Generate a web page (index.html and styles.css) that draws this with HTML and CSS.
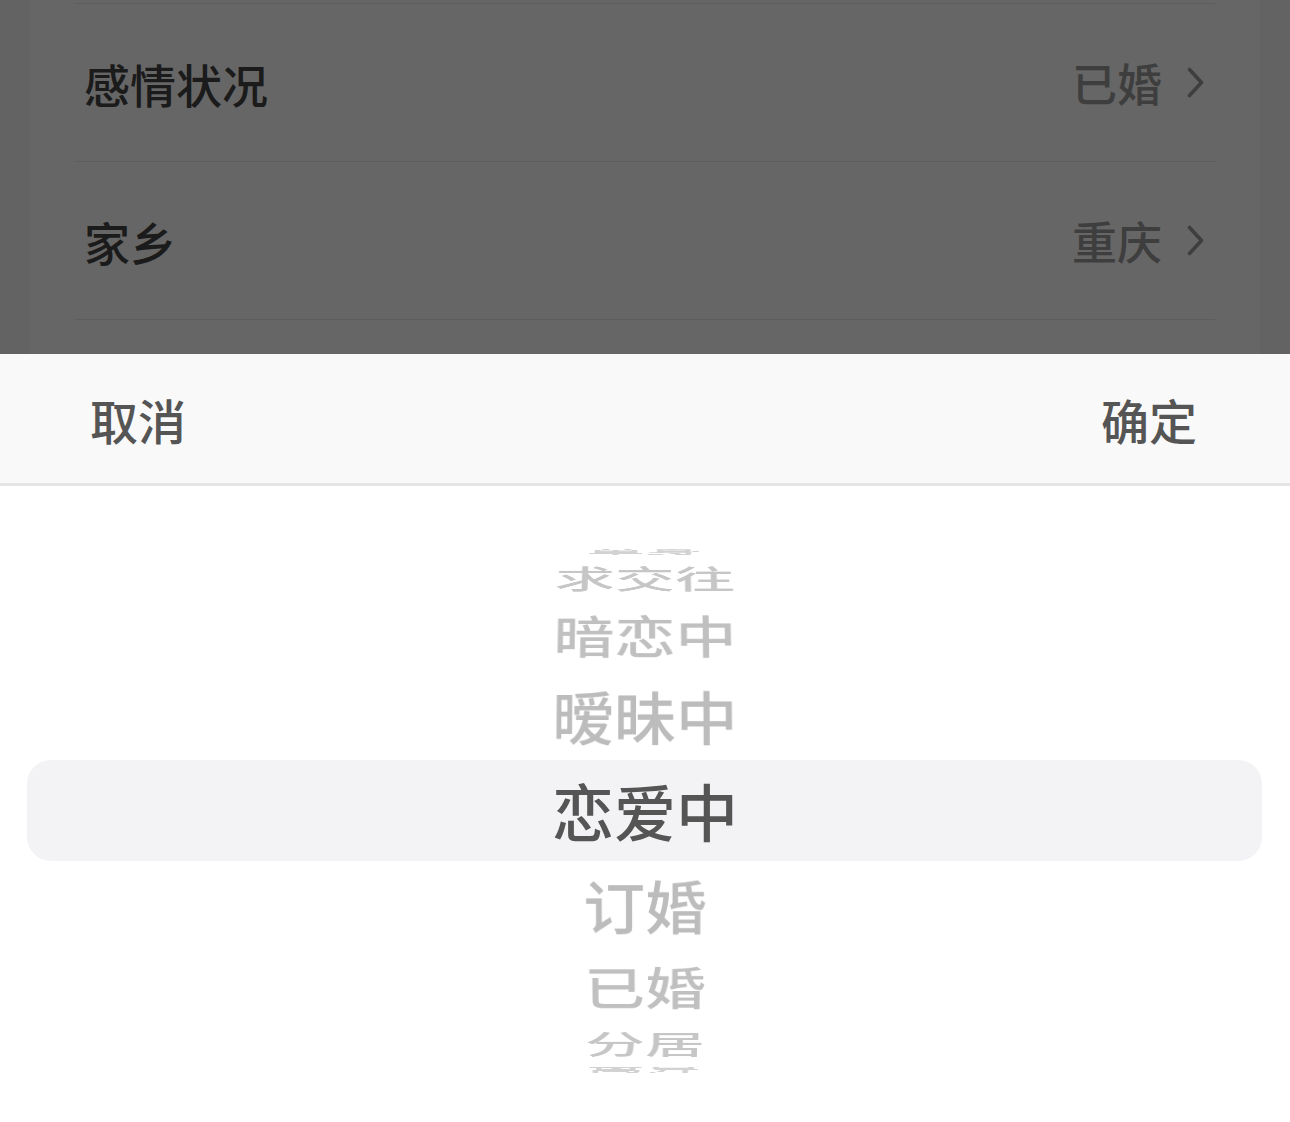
FILE: index.html
```html
<!DOCTYPE html>
<html lang="zh-CN">
<head>
<meta charset="utf-8">
<title>感情状况</title>
<link rel="stylesheet" href="styles.css">
</head>
<body>
<div class="page">
  <div class="card">
    <div class="row row-partial"></div>
    <div class="row">
      <span class="label">感情状况</span>
      <span class="value">已婚<svg class="chev" width="17" height="31" viewBox="0 0 17 31"><path d="M2.5 2.5 L14.5 15.5 L2.5 28.5" fill="none" stroke="#9c9c9c" stroke-width="3.6" stroke-linecap="round" stroke-linejoin="round"/></svg></span>
    </div>
    <div class="row">
      <span class="label">家乡</span>
      <span class="value">重庆<svg class="chev" width="17" height="31" viewBox="0 0 17 31"><path d="M2.5 2.5 L14.5 15.5 L2.5 28.5" fill="none" stroke="#9c9c9c" stroke-width="3.6" stroke-linecap="round" stroke-linejoin="round"/></svg></span>
    </div>
    <div class="row"></div>
  </div>
</div>
<div class="mask"></div>
<div class="sheet">
  <div class="sheet-head">
    <span class="btn">取消</span>
    <span class="btn">确定</span>
  </div>
  <div class="picker">
    <div class="highlight"></div>
    <div class="wheel">
      <div class="item a80">单身</div>
      <div class="item a60">求交往</div>
      <div class="item a40">暗恋中</div>
      <div class="item a20">暧昧中</div>
      <div class="item a0 selected">恋爱中</div>
      <div class="item b20">订婚</div>
      <div class="item b40">已婚</div>
      <div class="item b60">分居</div>
      <div class="item b80">离异</div>
    </div>
  </div>
</div>
</body>
</html>
```

FILE: styles.css
```css
html, body {
  margin: 0;
  padding: 0;
}
body {
  background: #f7f7f7;
  font-family: "Noto Sans CJK SC", "Noto Sans", sans-serif;
  overflow: hidden;
  height: 1122px;
}
.page {
  height: 1122px;
}
.card {
  margin: 0 30px;
  background: #ffffff;
  height: 1122px;
}
.row {
  margin: 0 45px;
  height: 157px;
  border-bottom: 1px solid #e6e6e6;
  display: flex;
  align-items: center;
  justify-content: space-between;
  padding: 0 11px 0 9px;
}
.row-partial {
  height: 3px;
}
.label {
  font-size: 46px;
  font-weight: 500;
  color: #454545;
  line-height: 1;
}
.value {
  font-size: 45px;
  font-weight: 500;
  color: #9c9c9c;
  display: flex;
  align-items: center;
  line-height: 1;
}
.chev {
  margin-left: 25px;
  display: block;
}
.mask {
  position: fixed;
  inset: 0;
  background: rgba(0, 0, 0, 0.6);
}
.sheet {
  position: fixed;
  left: 0;
  right: 0;
  bottom: 0;
  height: 768px;
  background: #ffffff;
  display: flex;
  flex-direction: column;
}
.sheet-head {
  height: 129px;
  background: #f9f9f9;
  border-bottom: 3px solid #e5e5e5;
  display: flex;
  align-items: center;
  justify-content: space-between;
  padding: 0 93px 0 90px;
}
.btn {
  font-size: 48px;
  font-weight: 500;
  color: #555555;
  line-height: 1;
}
.picker {
  padding-top: 274px;
  display: grid;
}
.highlight {
  grid-area: 1 / 1;
  margin: 0 28px 0 27px;
  height: 101px;
  border-radius: 24px;
  background: #f3f3f5;
}
.wheel {
  grid-area: 1 / 1;
  display: grid;
  height: 101px;
  perspective: 4000px;
}
.item {
  grid-area: 1 / 1;
  height: 101px;
  display: flex;
  align-items: center;
  justify-content: center;
  font-size: 62px;
  font-weight: 500;
  color: #bcbcbc;
  line-height: 1;
  backface-visibility: hidden;
  padding-bottom: 2px;
  box-sizing: border-box;
}
.selected {
  color: #555555;
  font-weight: 500;
}
.a0 { transform: translateZ(-278px) rotateX(0deg) translateZ(278px); }
.a20 { transform: translateZ(-278px) rotateX(20deg) translateZ(278px); }
.a40 { transform: translateZ(-278px) rotateX(40deg) translateZ(278px); color: #c0c0c0; }
.a60 { transform: translateZ(-278px) rotateX(60deg) translateZ(278px); color: #c6c6c6; }
.a80 { transform: translateZ(-278px) rotateX(80deg) translateZ(278px); color: #d2d2d2; }
.b20 { transform: translateZ(-278px) rotateX(-20deg) translateZ(278px); }
.b40 { transform: translateZ(-278px) rotateX(-40deg) translateZ(278px); color: #c0c0c0; }
.b60 { transform: translateZ(-278px) rotateX(-60deg) translateZ(278px); color: #c6c6c6; }
.b80 { transform: translateZ(-278px) rotateX(-80deg) translateZ(278px); color: #d2d2d2; }
```
